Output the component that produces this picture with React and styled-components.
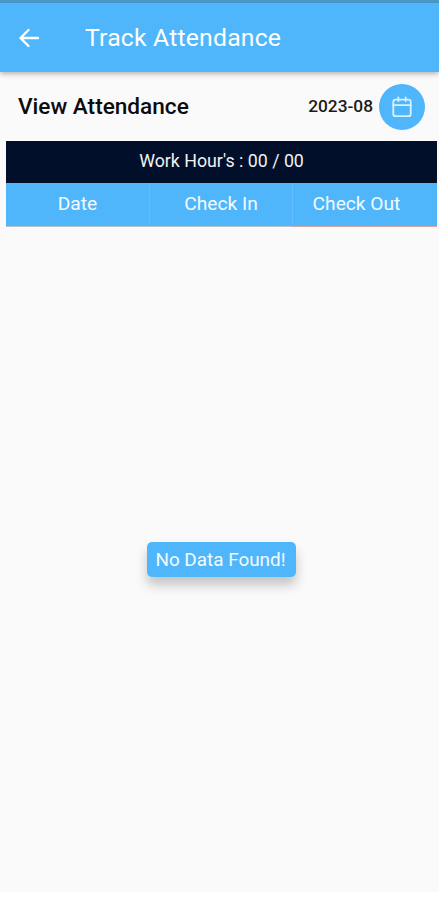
import React from 'react';
import styled, { createGlobalStyle } from 'styled-components';

const Global = createGlobalStyle`
    html, body {
        margin: 0;
        padding: 0;
        background: #fff;
    }
    body {
        font-family: Roboto, "Liberation Sans", sans-serif;
    }
`;

const Screen = styled.div`
    position: relative;
    width: 439px;
    height: 900px;
    overflow: hidden;
    background: #fff;
`;

const Surface = styled.div`
    height: 892px;
    background: #fafafa;
    display: flex;
    flex-direction: column;
`;

const StatusStrip = styled.div`
    height: 3px;
    background: #4a9bcb;
`;

const AppBar = styled.header`
    height: 69px;
    box-sizing: border-box;
    padding: 0 0 0 18px;
    flex-shrink: 0;
    background: #50b6fb;
    display: flex;
    align-items: center;
    box-shadow: 0 2px 5px rgba(0, 0, 0, 0.28);
    color: #fff;
`;

const BackIcon = styled.svg`
    width: 22px;
    height: 22px;
    display: block;
`;

const Title = styled.h1`
    margin: 0 0 0 45px;
    font-size: 24.75px;
    font-weight: 400;
    letter-spacing: 0.2px;
`;

const HeadingRow = styled.div`
    height: 69px;
    display: flex;
    align-items: center;
    padding: 0 14px 0 18px;
`;

const Heading = styled.div`
    flex: 1;
    padding-bottom: 1px;
    font-size: 22.6px;
    font-weight: 500;
    color: #0c0c0c;
`;

const Month = styled.div`
    padding-bottom: 1px;
    font-size: 17.3px;
    font-weight: 500;
    color: #1a1a1a;
    margin-right: 6px;
`;

const CalendarButton = styled.div`
    width: 46px;
    height: 46px;
    border-radius: 50%;
    background: #50b6fb;
    display: flex;
    align-items: center;
    justify-content: center;
`;

const Panel = styled.div`
    margin: 0 2px 0 6px;
`;

const HoursBand = styled.div`
    height: 42px;
    box-sizing: border-box;
    padding-bottom: 4px;
    background: #020f2b;
    color: #f2f2f2;
    font-size: 17.8px;
    display: flex;
    align-items: center;
    justify-content: center;
`;

const TableHead = styled.div`
    height: 44px;
    display: grid;
    grid-template-columns: 143px 143px 145px;
    background: #50b6fb;
`;

const HeadCell = styled.div`
    display: flex;
    align-items: center;
    justify-content: center;
    box-sizing: border-box;
    padding-right: ${p => p.$shift || 0}px;
    padding-bottom: 3px;
    color: #f4fbff;
    font-size: 19.2px;
    border-left: ${p => (p.$first ? 'none' : '1px solid #63bdfa')};
    border-bottom: 1px solid ${p => p.$underline || '#b9c3ca'};
`;

const Toast = styled.div`
    position: absolute;
    left: 147px;
    top: 542px;
    width: 149px;
    height: 35px;
    box-sizing: border-box;
    padding-right: 2px;
    border-radius: 5px;
    background: #50b6fb;
    color: #f4fbff;
    font-size: 18.9px;
    display: flex;
    align-items: center;
    justify-content: center;
    white-space: nowrap;
    box-shadow: 0 8px 12px rgba(0, 0, 0, 0.22);
`;

const App = () => {
    return (
        <Screen>
            <Global />
            <Surface>
                <StatusStrip />
                <AppBar>
                    <BackIcon viewBox="0 0 22 22" fill="none" stroke="#fff" strokeWidth="2.4" strokeLinecap="round" strokeLinejoin="round">
                        <path d="M20 11H2.5M10.5 3L2.5 11l8 8" />
                    </BackIcon>
                    <Title>Track Attendance</Title>
                </AppBar>
                <HeadingRow>
                    <Heading>View Attendance</Heading>
                    <Month>2023-08</Month>
                    <CalendarButton>
                        <svg width="22" height="22" viewBox="0 0 24 24" fill="none" stroke="#d8effe" strokeWidth="2" strokeLinecap="round" strokeLinejoin="round">
                            <rect x="2.5" y="4" width="19" height="18" rx="2.5" />
                            <path d="M2.5 10h19M8 1.5v4M16 1.5v4" />
                        </svg>
                    </CalendarButton>
                </HeadingRow>
                <Panel>
                    <HoursBand>Work Hour's : 00 / 00</HoursBand>
                    <TableHead>
                        <HeadCell $first>Date</HeadCell>
                        <HeadCell>Check In</HeadCell>
                        <HeadCell $shift={17} $underline="#d9a9a0">Check Out</HeadCell>
                    </TableHead>
                </Panel>
            </Surface>
            <Toast>No Data Found!</Toast>
        </Screen>
    );
};

export default App;
